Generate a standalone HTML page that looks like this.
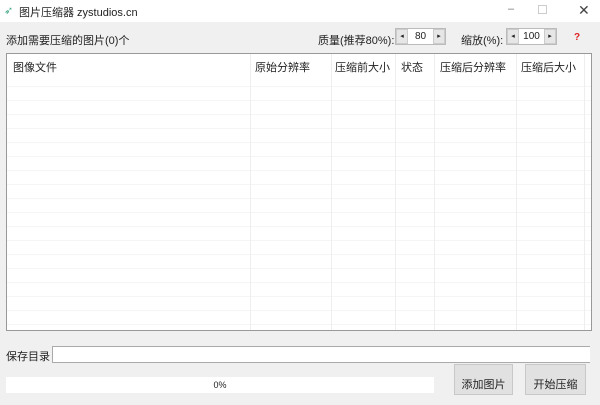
<!DOCTYPE html><html><head><meta charset="utf-8"><style>
*{margin:0;padding:0;box-sizing:border-box}
body{width:600px;height:402px;background:#f0f0f0;font-family:"Liberation Sans","Noto Sans CJK SC",sans-serif;font-size:11px;color:#222;position:relative;overflow:hidden}
.a{position:absolute}
.spin{position:absolute;height:17px;border:1px solid #bbb;background:#fff;display:flex}
.spin .b{width:12px;background:#e6e6e6;border:1px solid #ccc;font-size:7px;text-align:center;line-height:14px}
.spin .v{flex:1;text-align:center;line-height:15px;font-size:10px}
.col{position:absolute;top:0;bottom:0;border-left:1px solid #eee}
.hd{position:absolute;top:5px;font-size:11px}
.btn{position:absolute;background:#e1e1e1;border:1px solid #c8c8c8;text-align:center;font-size:11px;line-height:40px}
</style></head><body>
<div class="a" style="left:0;top:0;width:600px;height:22px;background:#fff"></div>
<div class="a" style="left:4px;top:4px;font-size:11px;color:#4a8">➶</div>
<div class="a" style="left:19px;top:4px;font-size:11px">图片压缩器 zystudios.cn</div>
<div class="a" style="left:508px;top:3px;color:#777">–</div>
<div class="a" style="left:538px;top:5px;width:9px;height:9px;border:1px solid #ccc"></div>
<div class="a" style="left:578px;top:2px;font-size:14px;color:#444">✕</div>
<div class="a" style="left:6px;top:32px">添加需要压缩的图片(0)个</div>
<div class="a" style="left:318px;top:32px">质量(推荐80%):</div>
<div class="spin" style="left:395px;top:28px;width:51px"><div class="b">◂</div><div class="v">80</div><div class="b">▸</div></div>
<div class="a" style="left:461px;top:32px">缩放(%):</div>
<div class="spin" style="left:506px;top:28px;width:51px"><div class="b">◂</div><div class="v">100</div><div class="b">▸</div></div>
<div class="a" style="left:574px;top:32px;color:#d22;font-size:10px;font-weight:bold">?</div>
<div class="a" style="left:6px;top:53px;width:586px;height:278px;background:#fff;border:1px solid #999;overflow:hidden;
background-image:repeating-linear-gradient(#fff 0,#fff 13px,#f5f5f5 13px,#f5f5f5 14px);background-position:0 19px">
<div class="a" style="left:0;top:0;width:100%;height:20px;background:#fff"></div>
<div class="col" style="left:243px"></div><div class="col" style="left:324px"></div><div class="col" style="left:388px"></div><div class="col" style="left:427px"></div><div class="col" style="left:509px"></div><div class="col" style="left:577px"></div>
<div class="hd" style="left:6px">图像文件</div>
<div class="hd" style="left:248px">原始分辨率</div>
<div class="hd" style="left:328px">压缩前大小</div>
<div class="hd" style="left:394px">状态</div>
<div class="hd" style="left:433px">压缩后分辨率</div>
<div class="hd" style="left:514px">压缩后大小</div>
</div>
<div class="a" style="left:6px;top:348px">保存目录</div>
<div class="a" style="left:52px;top:346px;width:538px;height:17px;background:#fff;border:1px solid #aaa;border-right:none"></div>
<div class="a" style="left:6px;top:377px;width:428px;height:16px;background:#fff;text-align:center;font-size:9px;line-height:16px">0%</div>
<div class="btn" style="left:454px;top:364px;width:59px;height:31px;line-height:40px">添加图片</div>
<div class="btn" style="left:525px;top:364px;width:61px;height:31px;line-height:40px">开始压缩</div>
</body></html>
